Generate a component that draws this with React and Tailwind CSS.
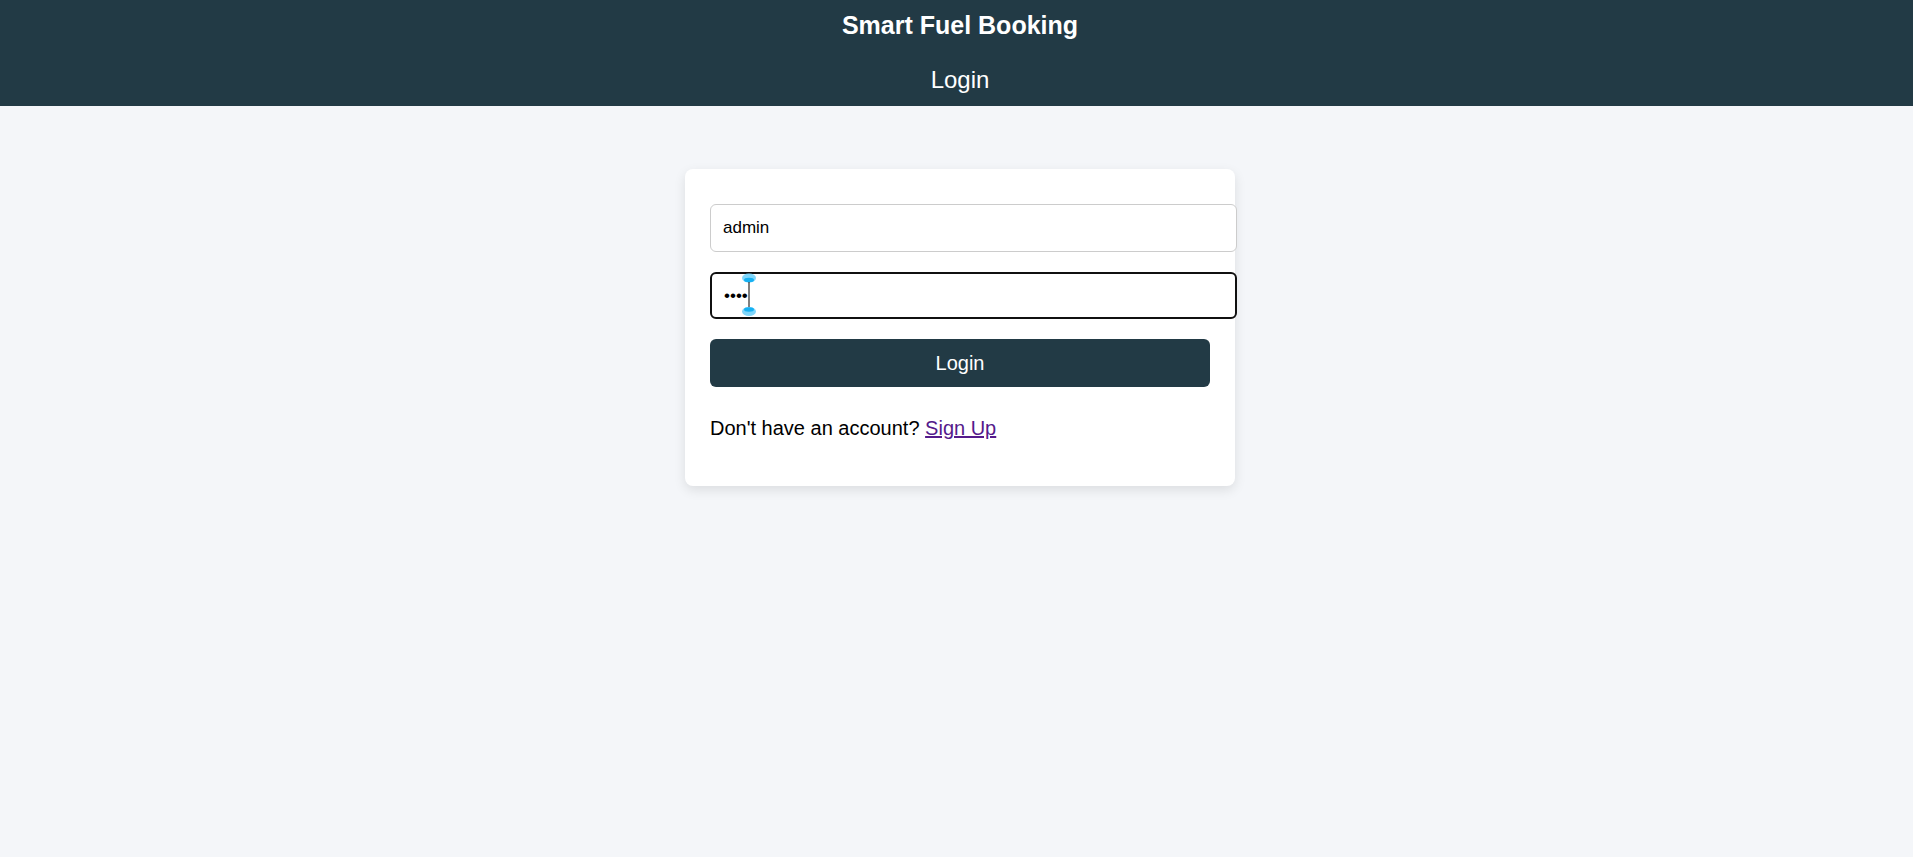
function SelectionHandles() {
  return (
    <svg className="pointer-events-none absolute left-[31px] top-[1px]" width="16" height="44" viewBox="0 0 16 44">
      <ellipse cx="8" cy="5" rx="7" ry="4.5" fill="#7fd6fb" />
      <ellipse cx="8" cy="7" rx="5" ry="2.2" fill="#16b1f3" />
      <line x1="8" y1="9" x2="8" y2="34" stroke="#000" strokeWidth="1" />
      <ellipse cx="8" cy="38.5" rx="7" ry="4.5" fill="#7fd6fb" />
      <ellipse cx="8" cy="36.5" rx="5" ry="2.2" fill="#16b1f3" />
    </svg>
  );
}

function LoginCard() {
  return (
    <div className="mx-auto w-[550px] rounded-[8px] bg-white px-[25px] pb-[46px] pt-[35px] shadow-[0_4px_12px_rgba(0,0,0,0.1)]">
      <input
        type="text"
        defaultValue="admin"
        className="block h-[48px] w-[527px] rounded-[6px] border border-[#cccccc] bg-white pl-[12px] text-[17px] text-black outline-none"
      />
      <div className="relative mt-[20px] h-[47px] w-[527px]">
        <input
          type="password"
          defaultValue="1234"
          className="block h-[47px] w-[527px] rounded-[6px] border-2 border-[#101010] bg-white pl-[12px] text-[17px] text-black outline-none"
        />
        <SelectionHandles />
      </div>
      <button
        type="button"
        className="mt-[20px] flex h-[48px] w-[500px] items-center justify-center rounded-[6px] bg-[#223a45] text-[20px] text-white"
      >
        Login
      </button>
      <p className="mt-[30px] text-[20px] leading-[23px] text-black">
        Don't have an account?{" "}
        <a href="#signup" className="text-[#551a8b] underline">
          Sign Up
        </a>
      </p>
    </div>
  );
}

export default function App() {
  return (
    <div className="min-h-screen w-full overflow-hidden bg-[#f4f6f9] font-['Liberation_Sans',Arial,sans-serif]">
      <div className="w-[1920px]">
        <header className="h-[106px] bg-[#223a45] text-center text-white">
          <h1 className="pt-[11px] text-[25px] font-bold leading-[28px]">Smart Fuel Booking</h1>
          <nav className="mt-[27px] text-[24px] leading-[28px]">Login</nav>
        </header>
        <main className="pt-[63px]">
          <LoginCard />
        </main>
      </div>
    </div>
  );
}
